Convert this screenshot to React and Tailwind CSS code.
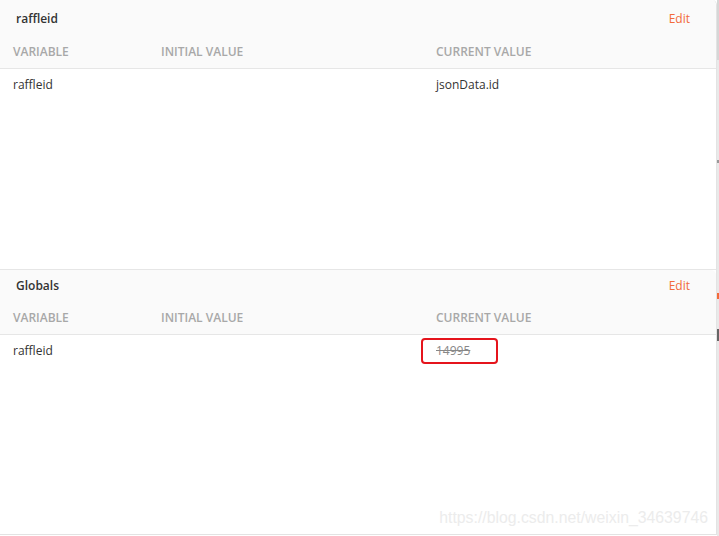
export default function App() {
  const sections = [
    { title: 'raffleid', name: 'raffleid', current: 'jsonData.id', struck: false, height: 'h-[269px]', titleH: 'h-[38px]', headH: 'h-[30px] pb-[2px]' },
    { title: 'Globals', name: 'raffleid', current: '14995', struck: true, height: 'h-[266px]', titleH: 'h-[32px]', headH: 'h-[32px] pb-[1px]' },
  ];

  return (
    <div className="w-[719px] h-[536px] bg-white flex font-['Open_Sans',sans-serif] overflow-hidden">
      <div className="w-[717px] h-[535px] border-r border-b border-[#e3e3e3] rounded-tr-[5px] flex flex-col">
        {sections.map((s, i) => (
          <div key={i} className={`${s.height} shrink-0 flex flex-col ${i > 0 ? 'border-t border-[#e6e6e6]' : ''}`}>
            <div className="bg-[#fafafa] border-b border-[#e6e6e6] rounded-tr-[5px]">
              <div className={`${s.titleH} flex items-center justify-between pl-4 pr-[26px]`}>
                <span className="text-[12px] font-semibold text-[#333]">{s.title}</span>
                <span className="text-[12px] text-[#f26b3a]">Edit</span>
              </div>
              <div className={`${s.headH} flex items-center text-[12px] font-semibold text-[#a8a8a8]`}>
                <span className="w-[161px] pl-[13px]">VARIABLE</span>
                <span className="w-[275px]">INITIAL VALUE</span>
                <span>CURRENT VALUE</span>
              </div>
            </div>
            <div className="h-[31px] flex items-center text-[12px] text-[#333]">
              <span className="w-[161px] pl-[13px]">{s.name}</span>
              <span className="w-[260px]"></span>
              {s.struck ? (
                <span className="w-[77px] h-[26px] border-2 border-[#e5141c] rounded-[4px] pl-[13px] flex items-center text-[#888] line-through">
                  {s.current}
                </span>
              ) : (
                <span className="pl-[15px]">{s.current}</span>
              )}
            </div>
            <div className="flex-1 flex items-end justify-end pr-[8px] pb-[5px]">
              {i === 1 && (
                <span className="text-[15.8px] text-[#ececec] font-['Liberation_Sans',sans-serif]">
                  https://blog.csdn.net/weixin_34639746
                </span>
              )}
            </div>
          </div>
        ))}
      </div>
      <div className="w-[2px] flex flex-col bg-[#e9e9e9]">
        <div className="h-[60px] bg-[#d6d6d6]" />
        <div className="h-[100px]" />
        <div className="h-[3px] bg-[#999]" />
        <div className="h-[130px]" />
        <div className="h-[6px] bg-[#f26b3a]" />
        <div className="h-[30px]" />
        <div className="h-[12px] bg-[#666]" />
      </div>
    </div>
  );
}
